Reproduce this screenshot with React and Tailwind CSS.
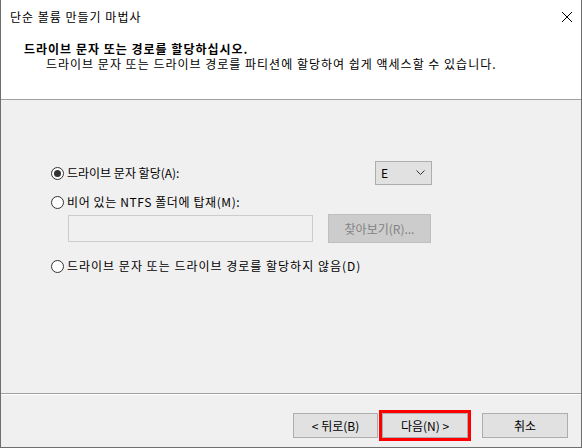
const font = { fontFamily: '"Noto Sans CJK KR", "Noto Sans", sans-serif' };

const Radio = ({ checked }) => (
  <span className="flex h-[13px] w-[13px] shrink-0 items-center justify-center rounded-full border border-[#333333] bg-white">
    {checked && <span className="h-[7px] w-[7px] rounded-full bg-[#333333]" />}
  </span>
);

const Button = ({ children, className = "" }) => (
  <div
    className={`flex h-[25px] items-center justify-center border border-[#adadad] bg-[#e1e1e1] text-[12px] text-black ${className}`}
  >
    {children}
  </div>
);

export default function App() {
  return (
    <div
      className="flex h-[448px] w-[582px] flex-col overflow-hidden border-x border-b border-[#6e6e6e] bg-[#f0f0f0] text-[12px] leading-none text-black"
      style={font}
    >
      {/* Header */}
      <div className="h-[100px] shrink-0 border-b border-[#a0a0a0] bg-white">
        <div className="flex h-[33px] items-center justify-between pl-[9px] pr-[4px]">
          <span className="tracking-[1px]">단순 볼륨 만들기 마법사</span>
          <svg width="12" height="12" viewBox="0 0 12 12" className="mr-[4px]">
            <path d="M1 1 L11 11 M11 1 L1 11" stroke="#000" strokeWidth="1" />
          </svg>
        </div>
        <div className="pl-[23px] pt-[10px] font-bold tracking-[1px]">드라이브 문자 또는 경로를 할당하십시오.</div>
        <div className="pl-[45px] pt-[3px] tracking-[1px]">
          드라이브 문자 또는 드라이브 경로를 파티션에 할당하여 쉽게 액세스할 수 있습니다.
        </div>
      </div>

      {/* Body */}
      <div className="flex-1 pl-[50px] pt-[61px]">
        <div className="flex h-[24px] items-center">
          <div className="flex w-[324px] items-center gap-[3px]">
            <Radio checked />
            <span>드라이브 문자 할당(A):</span>
          </div>
          <div className="flex h-[24px] w-[57px] items-center justify-between border border-[#adadad] bg-[#e1e1e1] pl-[5px] pr-[6px]">
            <span>E</span>
            <svg width="9" height="6" viewBox="0 0 9 6">
              <path d="M0.5 0.5 L4.5 4.5 L8.5 0.5" stroke="#333" strokeWidth="1" fill="none" />
            </svg>
          </div>
        </div>

        <div className="mt-[9px] flex h-[16px] items-center gap-[3px]">
          <Radio />
          <span className="tracking-[0.6px]">비어 있는 NTFS 폴더에 탑재(M):</span>
        </div>

        <div className="ml-[17px] mt-[4px] flex h-[29px] items-center gap-[15px]">
          <div className="h-[27px] w-[245px] border border-[#cccccc] bg-[#f0f0f0]" />
          <div className="flex h-[29px] w-[103px] items-center justify-center border border-[#bfbfbf] bg-[#cccccc] text-[#838383]">
            찾아보기(R)...
          </div>
        </div>

        <div className="mt-[15px] flex h-[16px] items-center gap-[3px]">
          <Radio />
          <span className="tracking-[1px]">드라이브 문자 또는 드라이브 경로를 할당하지 않음(D)</span>
        </div>
      </div>

      {/* Footer */}
      <div className="h-[54px] shrink-0 border-t border-[#a0a0a0]">
        <div className="h-full border-t border-white">
          <div className="flex items-center justify-end gap-[1px] pr-[13px] pt-[15px]">
            <Button className="w-[85px]">&lt; 뒤로(B)</Button>
            <div className="border-[3px] border-[#ff0000]">
              <Button className="w-[86px] border-[#0078d7]">다음(N) &gt;</Button>
            </div>
            <Button className="ml-[10px] w-[86px]">취소</Button>
          </div>
        </div>
      </div>
    </div>
  );
}
